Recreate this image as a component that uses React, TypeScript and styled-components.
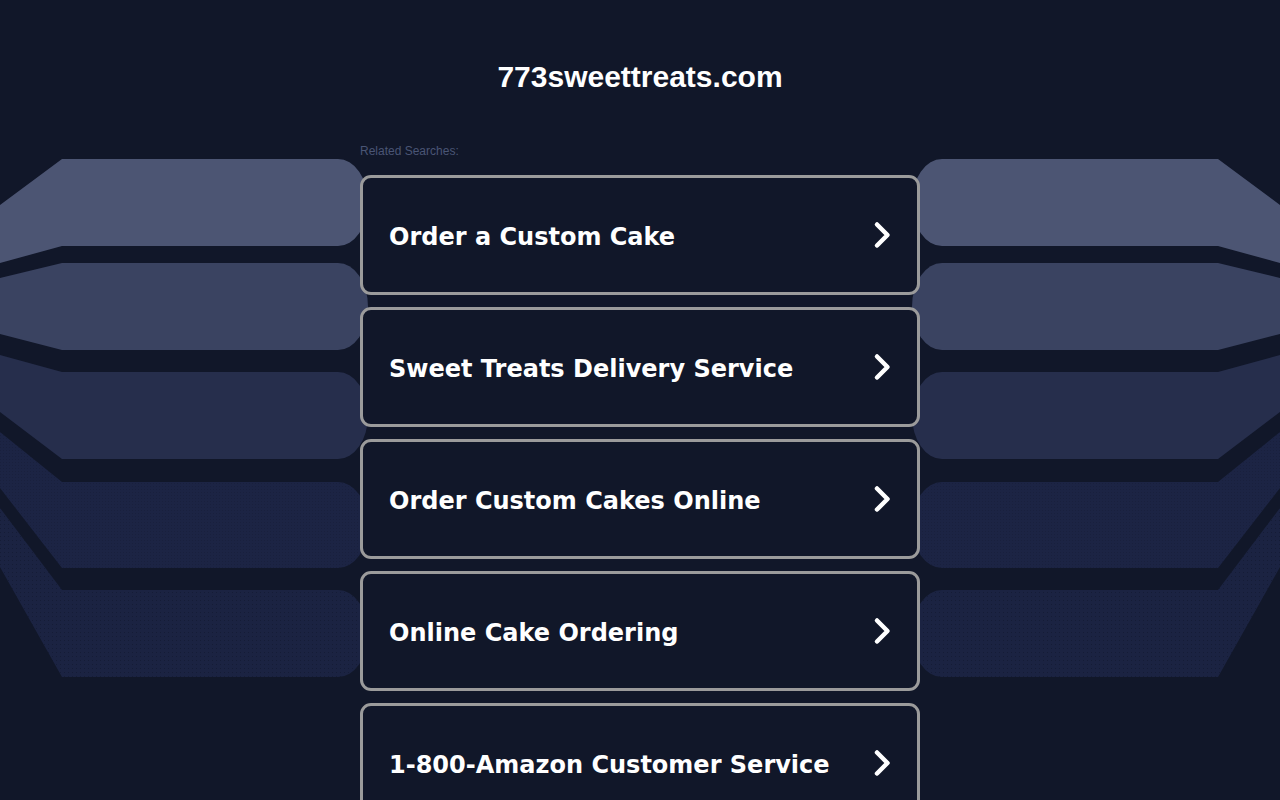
import React from 'react'
import styled, { createGlobalStyle } from 'styled-components'

const GlobalStyle = createGlobalStyle`
  html, body {
    margin: 0;
    padding: 0;
    background: #111729;
  }
  body {
    font-family: 'Liberation Sans', Arial, sans-serif;
    overflow: hidden;
  }
`

const searches = [
  'Order a Custom Cake',
  'Sweet Treats Delivery Service',
  'Order Custom Cakes Online',
  'Online Cake Ordering',
  '1-800-Amazon Customer Service',
]

// left side bands: y at x=0 (top/bottom) and y at x>=62 (top/bottom)
const bands = [
  { tl: 205, tr: 159, br: 246, bl: 263, fill: '#4c5573' },
  { tl: 278, tr: 263, br: 350, bl: 334, fill: '#3a4361' },
  { tl: 355, tr: 372, br: 459, bl: 412, fill: '#262e4c' },
  { tl: 432, tr: 482, br: 568, bl: 488, fill: 'url(#dots4)' },
  { tl: 508, tr: 590, br: 677, bl: 567, fill: 'url(#dots5)' },
]

const bandPath = (b: typeof bands[number]) => {
  const ry = (b.br - b.tr) / 2
  return `M0,${b.tl} L62,${b.tr} L338,${b.tr} A30,${ry} 0 0 1 338,${b.br} L62,${b.br} L0,${b.bl} Z`
}

const Page = styled.div`
  position: relative;
  min-height: 800px;
  background: #111729;
`

const Backdrop = styled.svg`
  position: absolute;
  top: 0;
  left: 0;
  width: 1280px;
  height: 800px;
  z-index: 0;
`

const Content = styled.div`
  position: relative;
  z-index: 1;
  width: 560px;
  margin: 0 auto;
  padding-top: 59px;
`

const Title = styled.h1`
  margin: 0;
  text-align: center;
  color: #ffffff;
  font-family: 'Liberation Sans', Arial, sans-serif;
  font-size: 30px;
  font-weight: 700;
  line-height: 36px;
`

const Related = styled.div`
  margin-top: 49px;
  color: #4a5575;
  font-size: 12px;
  line-height: 14px;
`

const List = styled.div`
  display: flex;
  flex-direction: column;
  gap: 12px;
  margin-top: 17px;
`

const Card = styled.a`
  display: flex;
  align-items: center;
  justify-content: space-between;
  box-sizing: border-box;
  height: 120px;
  padding: 4px 26px 0 26px;
  border: 3px solid #9b9b9b;
  border-radius: 11px;
  background: #111729;
  color: #ffffff;
  text-decoration: none;
  font-family: 'DejaVu Sans', Verdana, sans-serif;
  font-size: 24px;
  font-weight: 700;
`

const ChevronIcon = styled.svg`
  margin-top: -4px;
`

const Chevron = () => (
  <ChevronIcon width="18" height="28" viewBox="0 0 18 28">
    <polyline
      points="4,3.5 14.5,14 4,24.5"
      fill="none"
      stroke="#ffffff"
      strokeWidth="4.5"
      strokeLinecap="round"
      strokeLinejoin="round"
    />
  </ChevronIcon>
)

export default function App() {
  return (
    <Page>
      <GlobalStyle />
      <Backdrop viewBox="0 0 1280 800">
        <defs>
          <pattern id="dots4" width="3" height="3" patternUnits="userSpaceOnUse">
            <rect width="3" height="3" fill="#1c2444" />
            <rect width="1" height="1" fill="#19203d" />
          </pattern>
          <pattern id="dots5" width="4" height="4" patternUnits="userSpaceOnUse">
            <rect width="4" height="4" fill="#1b2342" />
            <rect width="1" height="1" fill="#151c36" />
          </pattern>
        </defs>
        <g>
          {bands.map((b, i) => (
            <path key={i} d={bandPath(b)} fill={b.fill} />
          ))}
        </g>
        <g transform="translate(1280,0) scale(-1,1)">
          {bands.map((b, i) => (
            <path key={i} d={bandPath(b)} fill={b.fill} />
          ))}
        </g>
      </Backdrop>
      <Content>
        <Title>773sweettreats.com</Title>
        <Related>Related Searches:</Related>
        <List>
          {searches.map((s) => (
            <Card key={s} href="#">
              <span>{s}</span>
              <Chevron />
            </Card>
          ))}
        </List>
      </Content>
    </Page>
  )
}
